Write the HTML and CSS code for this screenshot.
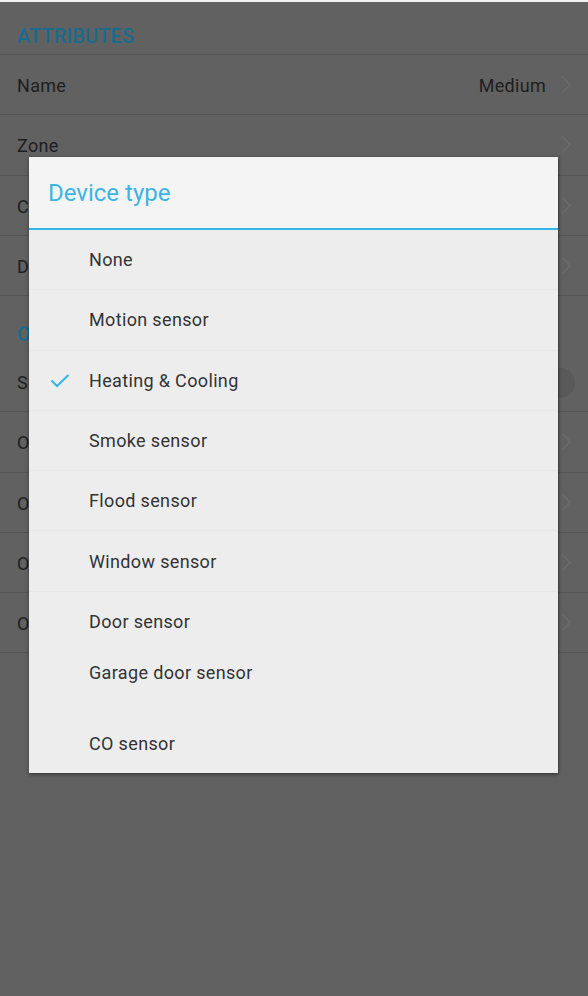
FILE: index.html
```html
<!DOCTYPE html>
<html>
<head>
<meta charset="utf-8">
<link rel="stylesheet" href="styles.css">
</head>
<body>
<div class="topbar"></div>
<div class="page">
  <div class="section">ATTRIBUTES</div>
  <div class="row"><span class="label">Name</span><span class="value">Medium</span><span class="chev"></span></div>
  <div class="row"><span class="label">Zone</span><span class="chev"></span></div>
  <div class="row"><span class="label">Category</span><span class="chev"></span></div>
  <div class="row"><span class="label">Device type</span><span class="chev"></span></div>
  <div class="section section2">OPTIONS</div>
  <div class="row"><span class="label">Show on dashboard</span><span class="toggle"></span></div>
  <div class="row"><span class="label">Option 1</span><span class="chev"></span></div>
  <div class="row"><span class="label">Option 2</span><span class="chev"></span></div>
  <div class="row"><span class="label">Option 3</span><span class="chev"></span></div>
  <div class="row"><span class="label">Option 4</span><span class="chev"></span></div>
</div>

<div class="dialog">
  <div class="dlg-title">Device type</div>
  <div class="dlg-list">
    <div class="item"><span class="check"></span>None</div>
    <div class="item"><span class="check"></span>Motion sensor</div>
    <div class="item"><span class="check"><svg width="20" height="14" viewBox="0 0 20 14"><path d="M1.5 6.5 L7 12 L18.5 1" fill="none" stroke="#33b5e5" stroke-width="2"/></svg></span>Heating &amp; Cooling</div>
    <div class="item"><span class="check"></span>Smoke sensor</div>
    <div class="item"><span class="check"></span>Flood sensor</div>
    <div class="item"><span class="check"></span>Window sensor</div>
    <div class="item item-nodiv"><span class="check"></span>Door sensor</div>
    <div class="item item-nodiv item-garage"><span class="check"></span>Garage door sensor</div>
    <div class="item item-nodiv item-co"><span class="check"></span>CO sensor</div>
  </div>
</div>
</body>
</html>
```
FILE: styles.css
```css
html, body {
  margin: 0;
  padding: 0;
}
body {
  background: #616161;
  font-family: Roboto, "Noto Sans", sans-serif;
  width: 588px;
  height: 996px;
  overflow: hidden;
  position: relative;
}
.topbar {
  height: 2px;
  background: #f0f0f0;
}
.page {
  display: flex;
  flex-direction: column;
}
.section {
  height: 53px;
  box-sizing: border-box;
  padding: 22px 0 0 17px;
  font-size: 20px;
  font-weight: 500;
  color: #1a6b8c;
  border-bottom: 1px solid #555555;
  letter-spacing: 0.1px;
  flex: none;
}
.section2 {
  height: 56px;
  padding-top: 26px;
  border-bottom: none;
}
.row {
  height: 60.25px;
  flex: none;
  box-sizing: border-box;
  border-bottom: 1px solid #555555;
  display: flex;
  align-items: center;
  padding: 2px 17px 0 17px;
  font-size: 18px;
  letter-spacing: 0.3px;
  color: #1e1e1e;
}
.label {
  flex: 1;
}
.value {
  margin-right: 16px;
}
.chev {
  width: 8px;
  height: 8px;
  border-top: 1px solid #6c6c6c;
  border-right: 1px solid #6c6c6c;
  transform: rotate(45deg) scale(1.35, 1.35);
  position: relative;
  left: -4px;
  top: -1px;
}
.toggle {
  width: 30px;
  height: 30px;
  border-radius: 50%;
  background: #595959;
  margin-right: -4px;
}
.dialog {
  position: absolute;
  left: 29px;
  top: 157px;
  width: 529px;
  height: 616px;
  background: #ededee;
  box-shadow: 0 2px 4px rgba(0,0,0,0.35), 1px 0 2px rgba(0,0,0,0.25);
  display: flex;
  flex-direction: column;
  overflow: hidden;
}
.dlg-title {
  height: 73px;
  flex: none;
  box-sizing: border-box;
  background: #f4f4f4;
  border-bottom: 2px solid #33b5e5;
  padding: 22px 0 0 19px;
  font-size: 24px;
  color: #3cb4e4;
}
.dlg-list {
  display: flex;
  flex-direction: column;
}
.item {
  height: 60.3px;
  flex: none;
  box-sizing: border-box;
  border-bottom: 1px solid #e7e7e8;
  display: flex;
  align-items: center;
  font-size: 18px;
  letter-spacing: 0.35px;
  color: #333333;
}
.item-nodiv {
  border-bottom: none;
}
.item-garage {
  margin-top: -10px;
}
.item-co {
  margin-top: 11px;
}
.check {
  width: 60px;
  display: flex;
  justify-content: center;
  padding-left: 2px;
  box-sizing: border-box;
  margin-top: 1px;
}
```
